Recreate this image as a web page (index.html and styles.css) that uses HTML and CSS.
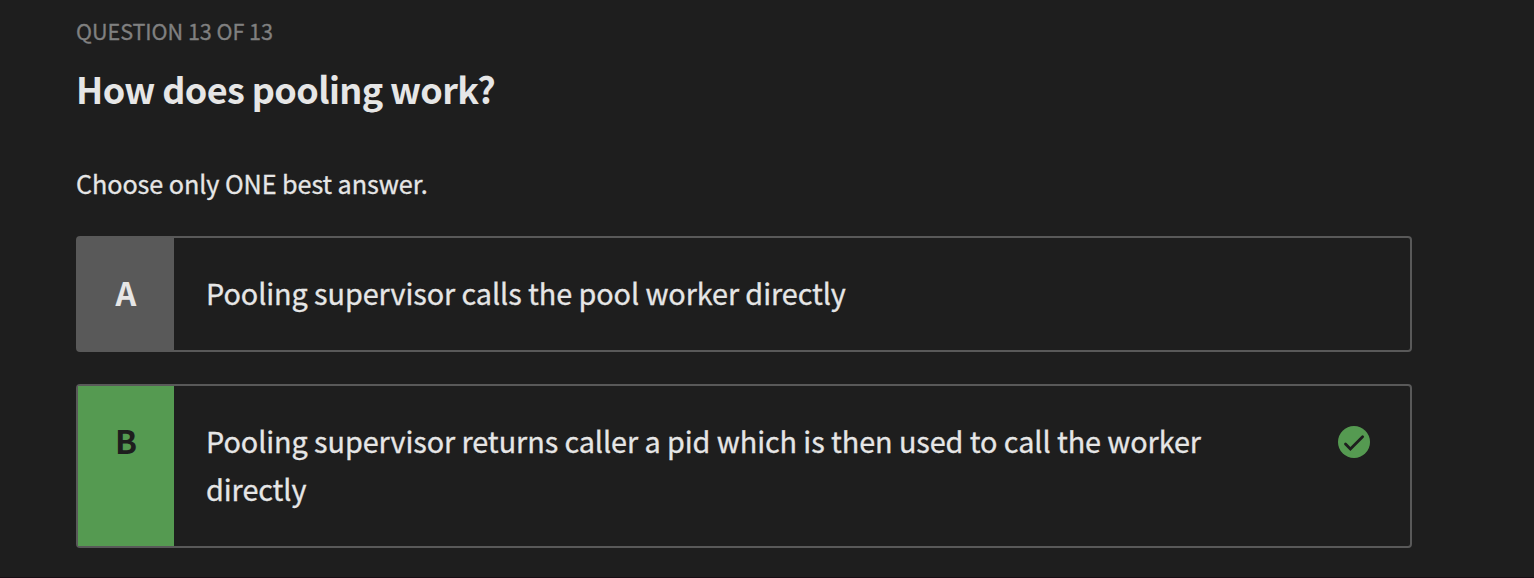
FILE: index.html
```
<!DOCTYPE html>
<html lang="en">
<head>
<meta charset="utf-8">
<title>Quiz</title>
<link rel="stylesheet" href="styles.css">
</head>
<body>
<main class="quiz">
  <p class="progress">QUESTION 13 OF 13</p>
  <h1 class="question">How does pooling work?</h1>
  <p class="hint">Choose only ONE best answer.</p>
  <ul class="answers">
    <li class="answer">
      <span class="letter">A</span>
      <span class="text">Pooling supervisor calls the pool worker directly</span>
    </li>
    <li class="answer correct">
      <span class="letter">B</span>
      <span class="text">Pooling supervisor returns caller a pid which is then used to call the worker directly</span>
      <svg class="check" viewBox="0 0 32 32" aria-label="Correct">
        <circle cx="16" cy="16" r="16" fill="#559a51"/>
        <path d="M7.5 18 L12.4 23 L24.6 10.8" fill="none" stroke="#1e1e1e" stroke-width="2.8" stroke-linecap="round" stroke-linejoin="miter"/>
      </svg>
    </li>
  </ul>
</main>
</body>
</html>
```
FILE: styles.css
```
* { box-sizing: border-box; margin: 0; padding: 0; }
body {
  height: 578px;
  overflow: hidden;
  background: #1e1e1e;
  border-bottom: 1px solid #170e14;
  color: #e6e6e6;
  font-family: "Noto Sans CJK SC", "Noto Sans CJK JP", sans-serif;
  -webkit-text-stroke-width: 0.3px;
}
.quiz { width: 1412px; padding: 13px 0 0 76px; }
.progress { font-size: 21.6px; line-height: 36px; color: #808080; letter-spacing: -0.06px; }
.question {
  margin-top: 9px;
  font-size: 36px;
  line-height: 60px;
  font-weight: 700;
  letter-spacing: -0.62px;
  -webkit-text-stroke-width: 0;
}
.hint { margin-top: 45px; font-size: 25.2px; line-height: 40px; letter-spacing: -0.07px; }
.answers { margin-top: 33px; display: flex; flex-direction: column; gap: 32px; list-style: none; }
.answer {
  display: flex;
  align-items: stretch;
  border: 2px solid #595959;
  border-radius: 4px;
  font-size: 28.8px;
  line-height: 48px;
}
.letter {
  width: 96px;
  flex: none;
  padding-top: 30px;
  background: #595959;
  font-size: 32.4px;
  font-weight: 700;
  text-align: center;
  -webkit-text-stroke-width: 0;
}
.text { flex: 1; padding: 31px 100px 33px 32px; letter-spacing: -0.075px; }
.correct .letter { background: #559a51; color: #1e1e1e; }
.correct .text { padding-right: 80px; }
.check { flex: none; width: 32px; height: 32px; margin: 40px 40px 0 0; }
```
